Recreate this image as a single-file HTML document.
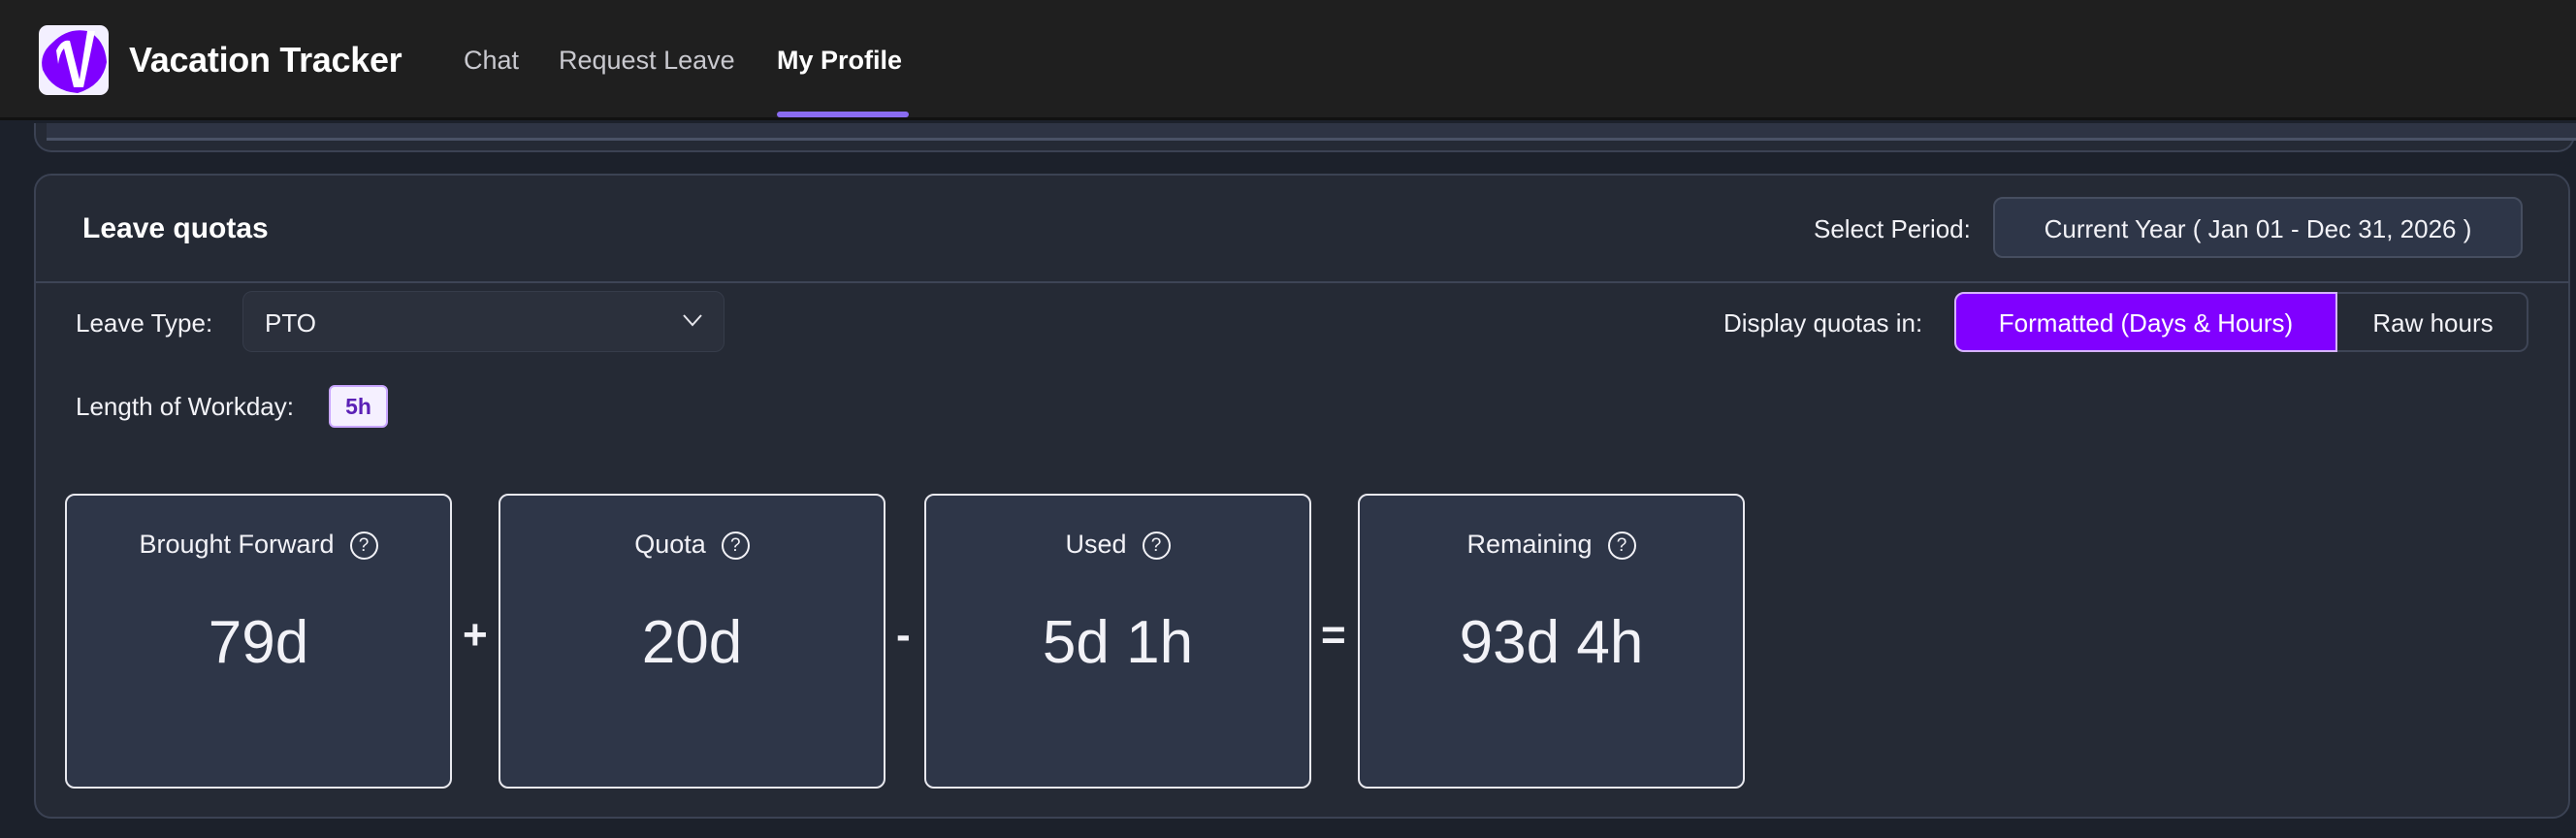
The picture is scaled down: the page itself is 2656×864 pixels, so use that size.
<!DOCTYPE html>
<html><head><meta charset="utf-8"><style>
*{box-sizing:border-box;margin:0;padding:0}
body{width:2656px;height:864px;background:#1c212b;font-family:"Liberation Sans",sans-serif;color:#f2f2f7;position:relative;overflow:hidden}
.abs{position:absolute}
.hdr{left:0;top:0;width:2656px;height:124px;background:#1f1f1f;border-bottom:3px solid #111}
.logo{left:40px;top:26px;width:72px;height:72px;background:#f3f0ff;border-radius:9px;overflow:hidden}
.title{left:133px;top:41px;font-size:36px;font-weight:bold;color:#fff;letter-spacing:-0.3px}
.nav{top:47px;font-size:27px;color:#c9c9cf}
.under{left:801px;top:115px;width:136px;height:6px;background:#8a6cf0;border-radius:3px}
.prev{left:35px;top:118px;width:2620px;height:39px;background:#252a35;border:2px solid #3b4253;border-top:none;border-radius:0 0 18px 18px}
.prevtop{left:48px;top:124px;width:2610px;height:21px;background:#2e3444;border-bottom:3px solid #4a5266}
.card{left:35px;top:179px;width:2615px;height:665px;background:#252a35;border:2px solid #3b4253;border-radius:18px}
.div{left:37px;top:290px;width:2612px;height:2px;background:#3e4556}
.lbl{font-size:26px;color:#f2f2f7}
.box{border-radius:10px}
.q{top:509px;width:399px;height:304px;background:#2e3648;border:2px solid #e8e8ee;border-radius:10px}
.qt{position:absolute;top:35px;left:0;width:100%;text-align:center;font-size:27px;white-space:nowrap}
.help{display:inline-block;width:29px;height:29px;border:2px solid #f2f2f7;border-radius:50%;font-size:19px;line-height:25px;text-align:center;vertical-align:2px;margin-left:16px}
.qv{position:absolute;top:116px;left:0;width:100%;text-align:center;font-size:62px}
.op{top:630px;font-size:44px;font-weight:bold}
</style></head><body>
<div class="abs hdr"></div>
<div class="abs logo"><svg width="72" height="72" viewBox="0 0 72 72"><path d="M14 18 Q30 2 50 6 Q68 14 70 38 Q66 62 40 70 Q14 68 4 46 Q0 30 14 18Z" fill="#7f00ff"/><path d="M22 32 Q28 20 36 22 L46 62 L54 12 L62 12 L50 70 L40 70 L30 30 Q26 34 24 46 Z" fill="#fff" transform="translate(-4,-6)"/></svg></div>
<div class="abs title">Vacation Tracker</div>
<div class="abs nav" style="left:478px">Chat</div>
<div class="abs nav" style="left:576px">Request Leave</div>
<div class="abs nav" style="left:801px;color:#fff;font-weight:bold">My Profile</div>
<div class="abs under"></div>
<div class="abs prev" style="top:127px;height:30px"></div>
<div class="abs prevtop" style="top:127px;height:18px"></div>
<div class="abs card"></div>
<div class="abs" style="left:85px;top:219px;font-size:30px;font-weight:bold;color:#fff">Leave quotas</div>
<div class="abs lbl" style="left:1870px;top:221px">Select Period:</div>
<div class="abs box" style="left:2055px;top:203px;width:546px;height:63px;background:#2e3648;border:2px solid #464e60"></div>
<div class="abs lbl" style="left:2055px;top:221px;width:546px;text-align:center">Current Year ( Jan 01 - Dec 31, 2026 )</div>
<div class="abs div"></div>
<div class="abs lbl" style="left:78px;top:318px">Leave Type:</div>
<div class="abs box" style="left:250px;top:300px;width:497px;height:63px;background:#2b303c;border:1px solid #363c4a"></div>
<div class="abs lbl" style="left:273px;top:318px">PTO</div>
<svg class="abs" style="left:703px;top:322px" width="22" height="16" viewBox="0 0 22 16"><path d="M2 3 L11 13 L20 3" fill="none" stroke="#e6e6ec" stroke-width="2"/></svg>
<div class="abs lbl" style="left:1777px;top:318px">Display quotas in:</div>
<div class="abs" style="left:2410px;top:301px;width:197px;height:62px;border:2px solid #3e4556;border-left:none;border-radius:0 10px 10px 0"></div>
<div class="abs lbl" style="left:2410px;top:318px;width:197px;text-align:center">Raw hours</div>
<div class="abs" style="left:2015px;top:301px;width:395px;height:62px;background:#8000ff;border:2px solid #d6b2ff;border-radius:10px 0 0 10px"></div>
<div class="abs lbl" style="left:2015px;top:318px;width:395px;text-align:center;color:#fff">Formatted (Days &amp; Hours)</div>
<div class="abs lbl" style="left:78px;top:404px">Length of Workday:</div>
<div class="abs" style="left:339px;top:397px;width:61px;height:44px;background:#f5f0ff;border:2px solid #c9a6ff;border-radius:6px;color:#5b21b6;font-weight:bold;font-size:23px;text-align:center;line-height:40px">5h</div>
<div class="abs q" style="left:67px"><div class="qt">Brought Forward<span class="help">?</span></div><div class="qv">79d</div></div>
<div class="abs op" style="left:477px">+</div>
<div class="abs q" style="left:514px"><div class="qt">Quota<span class="help">?</span></div><div class="qv">20d</div></div>
<div class="abs op" style="left:924px">-</div>
<div class="abs q" style="left:953px"><div class="qt">Used<span class="help">?</span></div><div class="qv">5d 1h</div></div>
<div class="abs op" style="left:1362px">=</div>
<div class="abs q" style="left:1400px"><div class="qt">Remaining<span class="help">?</span></div><div class="qv">93d 4h</div></div>
</body></html>
